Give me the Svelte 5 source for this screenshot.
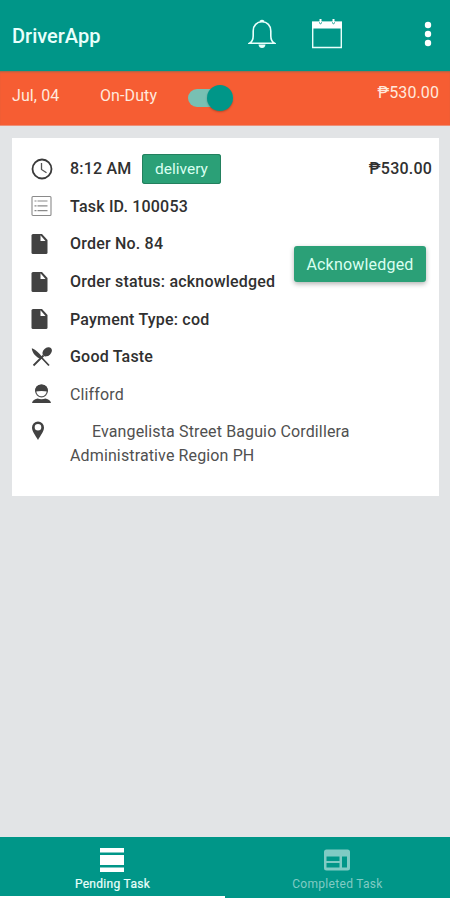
<script lang="ts">
	type Row = { icon: string; text: string };

	const amount = '₱530.00';
	const rows: Row[] = [
		{ icon: 'list', text: 'Task ID. 100053' },
		{ icon: 'file', text: 'Order No. 84' },
		{ icon: 'file', text: 'Order status: acknowledged' },
		{ icon: 'file', text: 'Payment Type: cod' },
		{ icon: 'food', text: 'Good Taste' }
	];
</script>

{#snippet icon(name: string)}
	<svg class="icon" viewBox="0 0 22 22" width="22" height="22" fill="#424242">
		{#if name === 'clock'}
			<circle cx="11" cy="11" r="9.5" fill="none" stroke="#3a3a3a" stroke-width="1.8" />
			<path d="M10.5 5v6.5l5 3.3" fill="none" stroke="#555" stroke-width="1.3" />
		{:else if name === 'list'}
			<rect x="1" y="1.5" width="19" height="19" rx="1" fill="none" stroke="#8a8a8a" stroke-width="1.1" />
			<path d="M3.5 6h2m1 0h10M3.5 10.8h2m1 0h10M3.5 15.6h2m1 0h10" stroke="#8a8a8a" stroke-width="1.2" />
		{:else if name === 'file'}
			<path d="M2 1h9l5.500 6v12.500q0 1.500-1.500 1.500h-13q-1.500 0-1.500-1.500v-17Q.5 1 2 1z" />
			<path d="M9.500 2.300l5 5.700h-5z" fill="#fff" />
		{:else if name === 'food'}
			<path d="M.8 2.200C4 3 9 8 10.800 10.500L9 12.500C5 11.500.8 6 .8 2.200z" />
			<path d="M9.500 10.500l8.500 9M12.500 9.500l-10 10" stroke="#424242" stroke-width="1.8" fill="none" />
			<ellipse cx="16.200" cy="5.800" rx="5.300" ry="3.900" transform="rotate(-43 16.200 5.800)" />
		{:else if name === 'person'}
			<circle cx="10.500" cy="8" r="5.800" fill="none" stroke="#555" stroke-width="1.300" />
			<path d="M4 8.500Q4 1.500 10.500 1.500T17 8.500q-6.500-1.200-13 0z" />
			<path d="M1 20q.5-3.500 5.500-4.500 4 1.500 8 0 5 1 5.500 4.500z" />
		{:else if name === 'pin'}
			<path fill-rule="evenodd" d="M7 1.500a6 6 0 0 1 6 6c0 4-3.500 8-6 12.500C4.500 15.500 1 11.500 1 7.500a6 6 0 0 1 6-6zm0 2.500a3.300 3.300 0 1 0 0 6.600A3.300 3.300 0 1 0 7 4z" />
		{/if}
	</svg>
{/snippet}

<div class="app">
	<header class="toolbar">
		<h1>DriverApp</h1>
		<svg class="bell" width="28" height="30" viewBox="0 0 28 30" fill="none" stroke="#e9fffb" stroke-width="1.600">
			<path d="M12 2.500q2-2 4 0M1.500 24.300c2.500-1.500 3.700-4 3.700-7.300v-5c0-5.500 3.500-9.200 8.800-9.200s8.800 3.700 8.800 9.200v5c0 3.300 1.200 5.800 3.700 7.300z" />
			<path d="M10.500 25.500h7q-.5 3.500-3.500 3.500t-3.500-3.500z" fill="#e9fffb" stroke="none" />
		</svg>
		<svg class="calendar" width="30" height="30" viewBox="0 0 30 30">
			<path d="M.7 3.500h28.600v25H.7z" fill="none" stroke="#e9fffb" stroke-width="1.400" />
			<path d="M0 2.500h30v7H0zM7.500 0h2v4h-2zM20.500 0h2v4h-2z" fill="#fff" />
			<path d="M7 3.500q1.500 2.500 3 0M20 3.500q1.500 2.500 3 0" fill="none" stroke="#009688" />
		</svg>
		<svg class="more" width="8" height="26" viewBox="0 0 8 26" fill="#fff">
			<circle cx="4" cy="4" r="3.200" />
			<circle cx="4" cy="13" r="3.200" />
			<circle cx="4" cy="22" r="3.200" />
		</svg>
	</header>

	<div class="duty">
		<span class="date">Jul, 04</span>
		<span class="state">On-Duty</span>
		<div class="switch"><div class="knob"></div></div>
		<span class="total">{amount}</span>
	</div>

	<main>
		<section class="card">
			<div class="row">
				{@render icon('clock')}
				<b class="time">8:12 AM</b>
				<span class="tag">delivery</span>
				<b class="price">{amount}</b>
			</div>
			{#each rows as row}
				<div class="row">
					{@render icon(row.icon)}
					<b>{row.text}</b>
				</div>
			{/each}
			<div class="row">
				{@render icon('person')}
				<span>Clifford</span>
			</div>
			<div class="row address">
				{@render icon('pin')}
				<p>Evangelista Street Baguio Cordillera<br />Administrative Region PH</p>
			</div>
			<button>Acknowledged</button>
		</section>
	</main>

	<nav>
		<div class="tab active">
			<svg width="24" height="24" viewBox="0 0 24 24" fill="#fff">
				<path d="M0 0h24v4.500H0zM0 7h24v10H0zM0 19.500h24V24H0z" />
			</svg>
			<span>Pending Task</span>
		</div>
		<div class="tab">
			<svg width="26" height="24" viewBox="0 0 26 24" fill="#80cbc4">
				<path fill-rule="evenodd" d="M2.500 1.500h21Q26 1.500 26 4v16q0 2.500-2.500 2.500h-21Q0 22.500 0 20V4q0-2.500 2.500-2.500zM2.500 8.500v4.500h13V8.500zm0 6.500v4.500h13V15zm15.500-6.500v11h5v-11z" />
			</svg>
			<span>Completed Task</span>
		</div>
	</nav>
</div>

<style>
	:global(body) {
		margin: 0;
		background: #fff;
	}

	.app {
		height: 900px;
		display: flex;
		flex-direction: column;
		background: #e2e4e6;
		font-family: Roboto, sans-serif;
		font-size: 16px;
		overflow: hidden;
	}

	.toolbar {
		height: 71px;
		box-sizing: border-box;
		display: flex;
		align-items: center;
		padding: 0 18px 3px 12px;
		background: #009688;
		color: #e9fffb;
	}

	h1 {
		margin: 4px auto 0 0;
		font-size: 20px;
		font-weight: 500;
	}

	.bell {
		margin-right: 36px;
	}

	.calendar {
		margin-right: 82px;
	}

	.duty {
		height: 55px;
		box-sizing: border-box;
		display: flex;
		align-items: center;
		padding: 0 11px 6px 12px;
		background: #f65d33;
		border-bottom: 1px solid #ed8f77;
		box-shadow: inset 0 2px 2px -1px #9d694d;
		color: #ffe9dd;
		letter-spacing: 0.1px;
	}

	.date {
		width: 88px;
	}

	.state {
		width: 88px;
	}

	.switch {
		width: 45px;
		height: 18px;
		margin-top: 6px;
		border-radius: 9px;
		background: #78c0b3;
		display: flex;
		align-items: center;
		justify-content: flex-end;
	}

	.knob {
		width: 26px;
		height: 26px;
		border-radius: 50%;
		background: #009688;
		box-shadow: 0 1px 2px rgba(0, 0, 0, 0.25);
		flex: none;
	}

	.total {
		margin: -5px 0 0 auto;
	}

	main {
		flex: 1;
		padding: 12px 11px 0 12px;
	}

	.card {
		position: relative;
		height: 358px;
		box-sizing: border-box;
		padding: 12px 7px 0 19px;
		background: #fff;
		color: #505050;
		letter-spacing: 0.13px;
	}

	.row {
		height: 37.6px;
		display: flex;
		align-items: center;
	}

	.icon {
		flex: none;
		margin-right: 17px;
	}

	b {
		font-weight: 500;
		color: #303030;
		letter-spacing: 0.2px;
	}

	.time {
		width: 72px;
	}

	.tag {
		width: 79px;
		height: 30px;
		line-height: 31px;
		box-sizing: border-box;
		border-radius: 3px;
		text-align: center;
		background: #2ba077;
		color: #d9fff0;
		box-shadow: inset 0 0 0 1px #23805e;
		font-size: 15.5px;
		letter-spacing: 0;
	}

	.price {
		margin-left: auto;
	}

	.address {
		align-items: flex-start;
		padding-top: 7px;
	}

	p {
		margin: 0;
		line-height: 24px;
		text-indent: 22px;
	}

	button {
		position: absolute;
		left: 282px;
		top: 108px;
		width: 132px;
		height: 36px;
		padding: 0;
		border: 0;
		border-radius: 3px;
		background: #2ba077;
		box-shadow: 0 2px 5px rgba(0, 0, 0, 0.3);
		color: #d9fff0;
		font: inherit;
		letter-spacing: 0.2px;
	}

	nav {
		height: 61px;
		display: flex;
		background: #009688;
		border-bottom: 2px solid #fff;
	}

	.tab {
		flex: 1;
		box-sizing: border-box;
		display: flex;
		flex-direction: column;
		align-items: center;
		gap: 5px;
		padding-top: 11px;
		color: #80cbc4;
		font-size: 12px;
		letter-spacing: 0.3px;
	}

	.tab svg {
		margin-right: 1px;
	}

	.tab.active {
		border-bottom: 2px solid #fff;
		color: #e9fffb;
		-webkit-text-stroke: 0.2px #e9fffb;
	}
</style>
